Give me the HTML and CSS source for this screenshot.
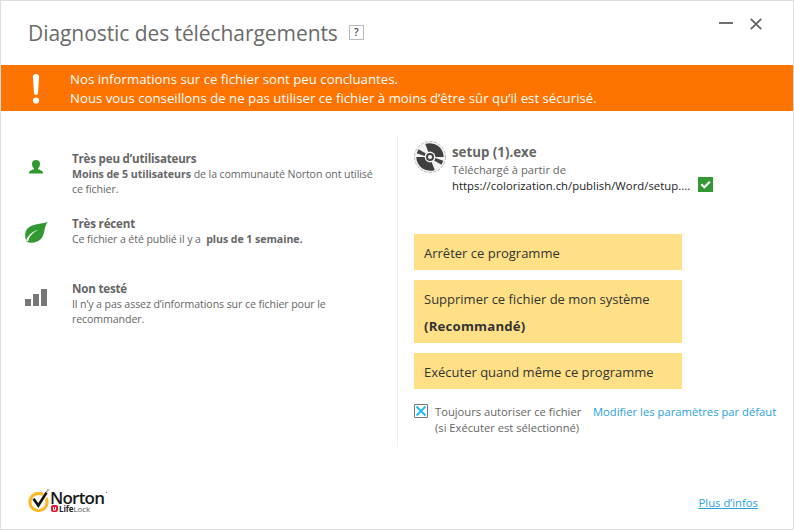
FILE: index.html
```html
<!DOCTYPE html>
<html lang="fr">
<head>
<meta charset="utf-8">
<title>Diagnostic des téléchargements</title>
<link rel="stylesheet" href="styles.css">
</head>
<body>
<main class="window">
  <header class="header">
    <h1 class="title">Diagnostic des téléchargements</h1>
    <span class="help">?</span>
    <div class="controls">
      <svg width="14" height="14" viewBox="0 0 14 14"><path d="M0 5H14" stroke="#707070" stroke-width="2"/></svg>
      <svg width="12" height="12" viewBox="0 0 12 12"><path d="M.8.8 11.200 11.200M11.200.8.8 11.200" stroke="#666" stroke-width="1.900"/></svg>
    </div>
  </header>
  <section class="banner">
    <svg class="alert" width="8" height="30" viewBox="0 0 8 30"><path d="M4 0C6.200 0 7.200 1.300 7.100 3.300L6 18.500C5.900 20.300 5.200 21 4 21S2.100 20.300 2 18.500L.9 3.300C.8 1.300 1.800 0 4 0Z" fill="#fff"/><circle cx="4" cy="26.500" r="3.100" fill="#fff"/></svg>
    <div>
      <p>Nos informations sur ce fichier sont peu concluantes.</p>
      <p>Nous vous conseillons de ne pas utiliser ce fichier à moins d’être sûr qu’il est sécurisé.</p>
    </div>
  </section>
  <div class="content">
    <section class="facts">
      <article class="fact">
        <div class="icon"><svg width="24" height="30" viewBox="0 0 24 30"><path d="M12 8c2.600 0 4 1.500 4 4 0 1.700-.8 3.400-1.900 4.300v1c2 .8 5 1.300 5 4.200H4.900c0-2.900 3-3.400 5-4.200v-1C8.800 15.400 8 13.700 8 12c0-2.500 1.400-4 4-4Z" fill="#2f9a30"/></svg></div>
        <div>
          <h2>Très peu d’utilisateurs</h2>
          <p><b>Moins de 5 utilisateurs</b> de la communauté Norton ont utilisé</p>
          <p>ce fichier.</p>
        </div>
      </article>
      <article class="fact">
        <div class="icon"><svg width="24" height="30" viewBox="0 0 24 30"><path d="M23.800 4.700C17 7.500 8 6.400 3.500 11.500.7 14.800.4 20 2.800 25c5 1.500 10.500.5 13.800-2.700C21.500 17.500 19.500 9.800 23.800 4.700Z" fill="#329932"/><path d="M2.100 23.500C4.200 18 8.300 14.700 14 12.700 9 15.700 5.600 18.600 3.900 24.800" fill="#fff"/></svg></div>
        <div>
          <h2>Très récent</h2>
          <p>Ce fichier a été publié il y a&nbsp; <b>plus de 1 semaine.</b></p>
        </div>
      </article>
      <article class="fact">
        <div class="icon"><svg width="24" height="30" viewBox="0 0 24 30"><path d="M1 17h6v7H1ZM9 12h6v12H9ZM17 7h6v17h-6Z" fill="#777"/></svg></div>
        <div>
          <h2>Non testé</h2>
          <p>Il n’y a pas assez d’informations sur ce fichier pour le</p>
          <p>recommander.</p>
        </div>
      </article>
    </section>
    <section class="actions">
      <div class="file">
        <svg width="32" height="32" viewBox="0 0 32 32"><circle cx="16" cy="16" r="15.500" fill="#f3f3f3" stroke="#aaa" stroke-width=".8" stroke-dasharray="3 1.500"/><path d="M2.300 16A13.700 13.700 0 0 0 20.700 28.900L17.500 20.500 11.500 16ZM29.700 16A13.700 13.700 0 0 0 11.300 3.100L14.500 11.500 20.500 16Z" fill="#3f3f3f"/><path d="M4.500 8.200 12 12.500 10.600 15 2.700 12.300ZM27.500 23.800 20 19.500 21.400 17 29.300 19.700Z" fill="#444"/><circle cx="16" cy="16" r="5.400" fill="#f5f5f5"/><circle cx="16" cy="16" r="3" fill="#fff" stroke="#444" stroke-width="2"/></svg>
        <div class="file-info">
          <h2 class="filename">setup (1).exe</h2>
          <p class="from">Téléchargé à partir de</p>
          <p class="url">https://colorization.ch/publish/Word/setup....</p>
        </div>
        <svg class="check" width="15" height="15" viewBox="0 0 15 15"><path d="M0 0h15v15H0Z" fill="#319832"/><path d="m3.300 7.300 3 3 5.500-5.600" fill="none" stroke="#fff" stroke-width="2.200"/></svg>
      </div>
      <div class="choices">
        <button class="choice">Arrêter ce programme</button>
        <button class="choice"><span>Supprimer ce fichier de mon système</span><b class="recommended">(Recommandé)</b></button>
        <button class="choice">Exécuter quand même ce programme</button>
      </div>
      <div class="allow">
        <svg width="14" height="14" viewBox="0 0 14 14"><path d="M.5.5h13v13H.5Z" fill="#fff" stroke="#777"/><path d="m2.500 2.500 9 9m0-9-9 9" stroke="#1bc0f5" stroke-width="1.900"/></svg>
        <div class="allow-text"><p>Toujours autoriser ce fichier</p><p>(si Exécuter est sélectionné)</p></div>
        <a class="defaults">Modifier les paramètres par défaut</a>
      </div>
    </section>
  </div>
  <footer class="footer">
    <div class="logo">
      <svg width="22" height="26" viewBox="0 0 22 26"><circle cx="10.500" cy="14" r="8.600" fill="none" stroke="#fdb927" stroke-width="3.200"/><path d="m6 12 4.500 6L19.500 4" fill="none" stroke="#fff" stroke-width="4.500"/><path d="m5.500 10.800 4.800 6.700L18.500 4.600" fill="none" stroke="#161616" stroke-width="2.700"/><path d="m18.500 4 2.200-3" stroke="#888" stroke-width="2" stroke-dasharray="1 .6"/></svg>
      <div class="wordmark">
        <div class="norton">Norton<i class="mark"></i></div>
        <div class="lifelock"><svg width="7" height="7" viewBox="0 0 7 7"><rect width="7" height="7" rx="2" fill="#e31b35"/><path d="M2.500 2v3h2V2" stroke="#fff" fill="none"/></svg><span><b>Life</b>Lock</span></div>
      </div>
    </div>
    <a class="more">Plus d’infos</a>
  </footer>
</main>
</body>
</html>
```
FILE: styles.css
```css
* { box-sizing: border-box; }
body { margin: 0; font-family: "Open Sans", sans-serif; color: #666; }
h1, h2, p { margin: 0; white-space: nowrap; }
svg { display: block; flex: none; }
.window { width: 794px; height: 530px; border: 1px solid #dedede; background: #fff; display: flex; flex-direction: column; }
.header { height: 64px; display: flex; padding: 0 31px 0 27px; }
.title { font-size: 21px; font-weight: 400; line-height: 28px; margin-top: 18px; color: #6b6b6b; letter-spacing: -.07px; }
.help { width: 15px; height: 15px; border: 1px solid #bbb; margin: 24px 0 0 11px; font-size: 10px; line-height: 13px; text-align: center; font-weight: 600; color: #444; }
.controls { margin-left: auto; display: flex; gap: 17px; padding-top: 17px; }
.banner { height: 46px; background: #ff7300; color: #fff; display: flex; padding: 5px 0 0 31px; font-size: 13.2px; line-height: 19px; letter-spacing: .02px; }
.alert { margin: 4px 31px 0 0; }
.banner p { margin-left: -1px; }
.content { display: flex; padding-top: 25px; height: 336px; }
.facts { width: 397px; height: 311px; border-right: 1px solid #eee; padding: 15px 0 0 23px; font-size: 10.6px; letter-spacing: -.09px; }
.fact { display: flex; height: 65px; }
.icon { width: 48px; padding-top: 1px; }
.fact h2 { font-size: 11.6px; line-height: 15px; margin-bottom: 1px; font-weight: 700; letter-spacing: -.2px; }
.fact p { line-height: 15px; }
.fact p b { letter-spacing: -.05px; }
.actions { padding: 5px 0 0 16px; }
.file { display: flex; height: 93px; }
.file-info { margin-left: 6px; width: 238px; }
.filename { font-size: 13.3px; line-height: 20px; margin-top: 1px; }
.from { font-size: 11.2px; line-height: 16px; }
.url { font-size: 11.3px; line-height: 16px; color: #222; letter-spacing: .03px; }
.check { margin: 36px 0 0 8px; }
.choices { display: flex; flex-direction: column; gap: 10px; width: 268px; }
.choice { display: flex; flex-direction: column; align-items: flex-start; border: 0; background: #ffe087; padding: 6px 10px 4px; font-family: inherit; font-size: 13px; line-height: 26px; color: #333; white-space: nowrap; }
.recommended { line-height: 25px; padding-top: 2px; font-size: 13.2px; letter-spacing: .2px; }
.allow { display: flex; padding-top: 15px; font-size: 11.2px; line-height: 16px; white-space: nowrap; }
.allow-text { margin: 0 12px 0 7px; width: 146px; }
.defaults, .more { color: #28a2df; }
.defaults { letter-spacing: .03px; }
.footer { display: flex; justify-content: space-between; padding: 41px 35px 0 27px; }
.more { font-size: 11.3px; line-height: 16px; text-decoration: underline; margin-top: 7px; white-space: nowrap; }
.logo { display: flex; height: 26px; }
.wordmark { color: #181818; padding-left: 1px; }
.norton { display: flex; height: 17px; line-height: 19px; margin-left: -1px; font-size: 17px; font-weight: 600; letter-spacing: -.8px; }
.mark { width: 1px; height: 1px; background: #777; margin: 4px 0 0 2px; }
.lifelock { display: flex; gap: 1px; height: 8px; line-height: 7px; font-size: 8px; letter-spacing: -.1px; color: #555; }
.lifelock b { color: #222; }
```
